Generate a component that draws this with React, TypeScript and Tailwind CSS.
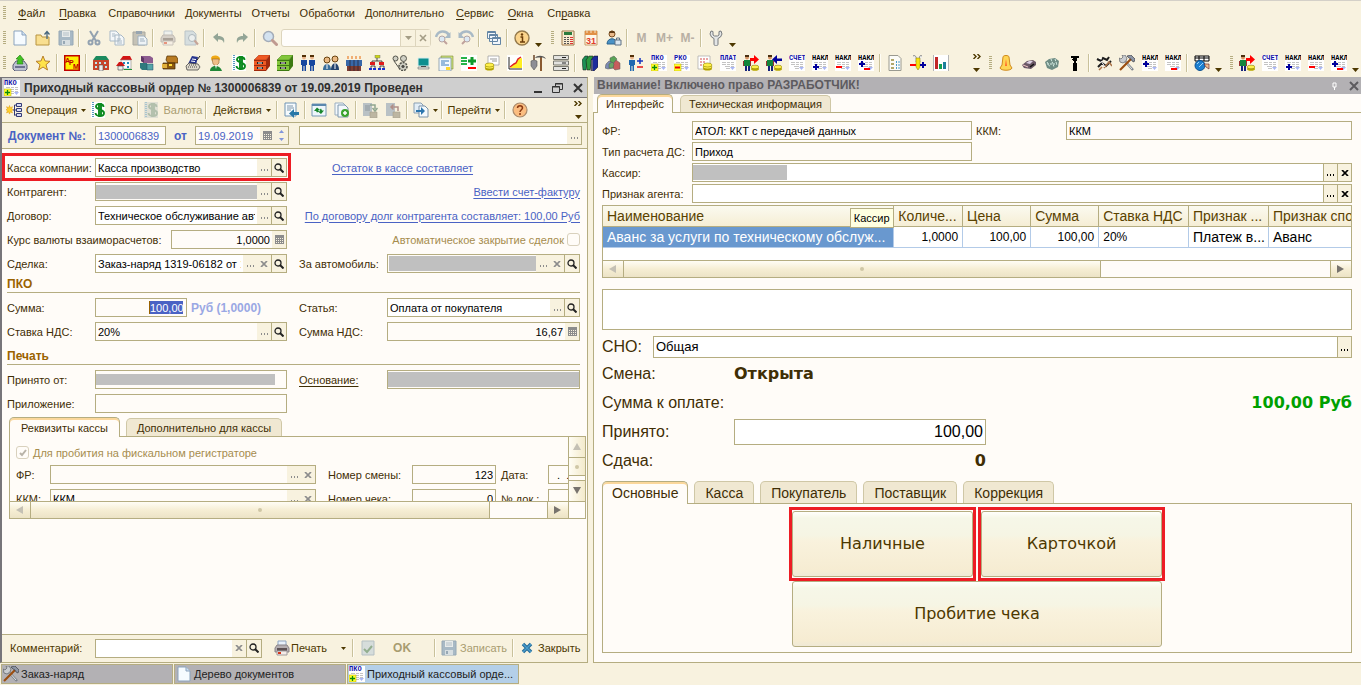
import { useId, type ReactNode } from 'react';

/* ---------- pixel icons ---------- */

type SlipProps = { label: string; color: string; sign: string };

function Slip({ label, color, sign }: SlipProps) {
  return (
    <g>
      <rect width="16" height="16" fill="#fff" />
      <path d="M2 7.500h4M7 7.500h3M11 7.500h3M2 9.500h4M7 9.500h3M11 9.500h3M5 11.500h5M11 11.500h3M6 13.500h4" stroke="#c3c3c3" />
      <path d="M10 12h5l-2.500 3z" fill="#a9b6f5" />
      <text x="0" y="5" fontSize="7" fontWeight="700" fontFamily="Liberation Mono, monospace" fill={color}>
        {label}
      </text>
      {sign === 'box+' && (
        <>
          <rect x="0" y="9" width="7" height="7" fill="#ffff2e" stroke="#b9a400" strokeWidth="0.500" />
          <path d="M1 12.500h5M3.500 10v5" stroke="#0a8a0a" strokeWidth="1.300" />
        </>
      )}
      {sign === 'box-' && (
        <>
          <rect x="0" y="9" width="7" height="7" fill="#ffff2e" stroke="#b9a400" strokeWidth="0.500" />
          <path d="M1 12.500h5" stroke="#e00" strokeWidth="2" />
        </>
      )}
      {sign === '+' && <path d="M1 12h6M4 9v6" stroke="#00009c" strokeWidth="2" />}
      {sign === '+up' && <path d="M1 9h6M4 6v6" stroke="#00009c" strokeWidth="2" />}
      {sign === '-' && <path d="M1 12h6" stroke="#f00" strokeWidth="2" />}
      {sign === '-r' && <path d="M6 14h6" stroke="#f00" strokeWidth="2" />}
      {sign === '+-' && (
        <>
          <path d="M1 9h6M4 6v6" stroke="#00009c" strokeWidth="2" />
          <path d="M6 14h6" stroke="#f00" strokeWidth="2" />
        </>
      )}
    </g>
  );
}

const coins = (
  <g>
    <ellipse cx="10.500" cy="13.500" rx="4.500" ry="2" fill="#b8a800" />
    <ellipse cx="10.500" cy="12" rx="4.500" ry="2" fill="#fff04a" stroke="#8c8000" strokeWidth="0.600" />
    <ellipse cx="10.500" cy="10" rx="4.500" ry="2" fill="#fff04a" stroke="#8c8000" strokeWidth="0.600" />
  </g>
);

const cabinet = (front: string, side: string) => (
  <g>
    <path d="M0 5l5-5h11l-4 5z" fill={front} stroke={side} strokeWidth="0.500" />
    <path d="M12 5l4-5v11l-4 5z" fill={side} />
    <path d="M0 5h12v11H0z" fill={front} />
    <path d="M0 5.500h12M0 10.500h12M0 15.500h12" stroke={side} />
    <path d="M3 7h6v2H3zM3 12h6v2H3z" fill="#222" />
    <path d="M4 8h4M4 13h4" stroke="#fff" />
  </g>
);

const person = (x: number, suit: string) => (
  <g>
    <circle cx={x} cy="2.500" r="2" fill="#e9b48a" />
    <path d={`M${x - 2} 0h4v2h-4z`} fill="#513008" />
    <path d={`M${x - 3} 5h6v5h-1v6h-1.500v-5h-1v5H${x - 2}v-6h-1z`} fill={suit} />
  </g>
);

const manArrow = (c: string, flip: boolean) => (
  <g>
    <circle cx="4" cy="2.500" r="2" fill="#d49464" />
    <path d="M2 0h4v2H2z" fill="#4a2f10" />
    <path d="M1 5h6v6H1z" fill="#12853b" />
    <path d="M2 11h2v5H2zM5 11h2v5H5z" fill="#15247c" />
    <path d="M0 6h1v5H0zM7 6h1v5H7z" fill="#933" />
    <path d={flip ? 'M16 3.500h-5V0L6 4.500 11 9V6h5z' : 'M7 3h4V0l5 4.500L11 9V6H7z'} fill={c} />
    <ellipse cx="12" cy="14" rx="4" ry="1.800" fill="#b8a800" />
    <ellipse cx="12" cy="12" rx="4" ry="1.800" fill="#fff04a" stroke="#8c8000" strokeWidth="0.600" />
  </g>
);

const hammerWrench = (
  <g>
    <path d="M4 4l10 11" stroke="#7f858c" strokeWidth="2.500" />
    <path d="M5 5l8 9" stroke="#dfe3e6" />
    <path d="M0 3l2 1 2-2-1-2h3l2 3-1 3-3 2-3-1z" fill="#c9ccd0" stroke="#5b6066" strokeWidth="0.700" />
    <path d="M12 4L1 15" stroke="#9a4d10" strokeWidth="2.200" />
    <path d="M8 1l4-1 4 4-1 3-2-1-1-2-2-1z" fill="#8d95a5" stroke="#3d4148" strokeWidth="0.700" />
  </g>
);

const sheet = (
  <g>
    <path d="M2 1h8l4 4v10H2z" fill="#f6fbff" stroke="#8ba3bd" />
    <path d="M10 1v4h4" fill="#cfe0f2" stroke="#8ba3bd" />
  </g>
);

const floppy = (
  <g>
    <path d="M1 1h14v14H1z" fill="#8ea7bd" stroke="#7790a8" />
    <path d="M4 1h8v6H4z" fill="#e3e9ee" />
    <path d="M5 3h6M5 5h6" stroke="#9db0c2" />
    <path d="M4 10h8v5H4z" fill="#cdd8e2" />
    <path d="M5 11h2v3H5z" fill="#7790a8" />
  </g>
);

const printer = (
  <g>
    <path d="M4 1h8v5H4z" fill="#e8f1fb" stroke="#8fa6c2" />
    <path d="M1 8l2-3h10l2 3v4H1z" fill="#b5afb2" stroke="#8a8488" />
    <path d="M3 8h10v3H3z" fill="#5d5254" />
    <path d="M3 11h10v4H3z" fill="#f4ece8" stroke="#a09a9c" />
    <path d="M4 12h3v2H4z" fill="#d8361c" />
  </g>
);

const dollar = (c: string, bg: string) => (
  <g>
    <path d="M1 0h14v16H1z" fill={bg} />
    <path d="M2 .5h2M2 2.500h2M2 4.500h2M2 6.500h2M2 8.500h2M2 10.500h2M2 12.500h2M2 14.500h2" stroke="#5a9ac0" />
    <path d="M13.500 5c0-4-7.500-4-7.500-.5C6 8 14 7 14 11c0 4-8 4-8.500 0M9 1v14M11 1v14" fill="none" stroke={c} strokeWidth="1.900" />
  </g>
);

const magnifier = (
  <g>
    <circle cx="6.500" cy="6.500" r="5" fill="#d3e2f0" stroke="#a3acb8" strokeWidth="1.500" />
    <path d="M10.500 10.500l4 4" stroke="#c09a90" strokeWidth="3" strokeLinecap="round" />
  </g>
);

const goto = (
  <g>
    <path d="M1 7C3 0 11 0 14 5" fill="none" stroke="#a9bac6" strokeWidth="2.500" />
    <path d="M15.500 2v6H9.500z" fill="#a9bac6" />
    <circle cx="7" cy="9" r="3" fill="#dbe8f3" stroke="#b3a5a5" />
    <path d="M9 11l3 3" stroke="#c0a29c" strokeWidth="2" />
  </g>
);

const icons: Record<string, ReactNode> = {
  new: sheet,
  open: (
    <g>
      <path d="M1 5h5l1 2h7v8H1z" fill="#f9df90" stroke="#b89440" />
      <path d="M12 9V2M9.500 4.500L12 1.500l2.500 3" fill="none" stroke="#45657d" strokeWidth="1.300" />
    </g>
  ),
  save: <g opacity="0.75">{floppy}</g>,
  cut: (
    <g fill="none" stroke="#93a2b0" strokeWidth="2">
      <path d="M4 1l6 10M12 1L6 11" />
      <circle cx="4.500" cy="12.500" r="2" />
      <circle cx="11.500" cy="12.500" r="2" />
    </g>
  ),
  copy: (
    <g stroke="#a9b9c6" fill="#f4f7f9">
      <path d="M1 1h6l3 3v7H1zM6 5h6l3 3v7H6z" />
      <path d="M3 4h3M3 6h3M8 9h4M8 11h5M8 13h5" />
    </g>
  ),
  paste: (
    <g>
      <path d="M1 2h12v13H1z" fill="#c5c2b6" stroke="#a9a89f" />
      <path d="M4 1h6v3H4z" fill="#97a5b1" />
      <path d="M6 6h6l3 3v6H6z" fill="#eef3f6" stroke="#9fb0be" />
      <path d="M8 9h4M8 11h5" stroke="#9fb0be" />
    </g>
  ),
  printMuted: <g opacity="0.5">{printer}</g>,
  preview: (
    <g opacity="0.7">
      <path d="M2 1h8l3 3v11H2z" fill="#c9d6e0" stroke="#a2b1be" />
      <circle cx="9" cy="8" r="3.500" fill="#e7eff5" stroke="#8fa0af" />
      <path d="M11.500 10.500l3.500 4" stroke="#b1847a" strokeWidth="2" />
    </g>
  ),
  undo: <path d="M2 7l5-4v3c5 0 7 2 6 7-1-3-3-4-6-3.500V12z" fill="#93a596" />,
  redo: <path d="M14 7L9 3v3c-5 0-7 2-6 7 1-3 3-4 6-3.500V12z" fill="#93a596" />,
  find: magnifier,
  goNext: goto,
  goPrev: <g transform="translate(16 0) scale(-1 1)">{goto}</g>,
  windows: (
    <g fill="#f1f6fb" stroke="#6486a5">
      <path d="M1.500 1.500h8v7h-8zM3.500 4.500h8v7h-8zM6.500 7.500h8v7h-8z" />
      <path d="M7 8.500h7M4 5.500h7M2 2.500h7" />
    </g>
  ),
  info: (
    <g>
      <circle cx="8" cy="8" r="7" fill="#fbd48c" stroke="#94794b" strokeWidth="1.400" />
      <circle cx="8" cy="4.500" r="1.200" fill="#6b3c08" />
      <path d="M6.500 7h2v5M6 12h5" stroke="#6b3c08" strokeWidth="1.500" fill="none" />
    </g>
  ),
  calc: (
    <g>
      <path d="M2 1h12v14H2z" fill="#f8ead0" stroke="#a07848" />
      <path d="M4 2h8v3H4z" fill="#2b7a3d" />
      <path d="M4 7h2v1H4zM7 7h2v1H7zM4 9h2v1H4zM7 9h2v1H7zM4 11h2v1H4zM7 11h2v1H7zM4 13h2v1H4zM7 13h2v1H7z" fill="#555" />
      <path d="M10 7h3v1h-3zM10 9h3v1h-3zM10 11h3v1h-3zM10 13h3v1h-3z" fill="#d33" />
    </g>
  ),
  calendar: (
    <g>
      <path d="M2 1h12v14H2z" fill="#fff7e8" stroke="#c69a66" />
      <path d="M2 1h12v4H2z" fill="#e08f45" />
      <path d="M4 0v3M8 0v3M12 0v3" stroke="#f7e3c4" />
      <text x="3" y="14" fontSize="9" fontWeight="700" fontFamily="Liberation Sans, sans-serif" fill="#e0402a">31</text>
    </g>
  ),
  userLock: (
    <g>
      <circle cx="6" cy="4" r="3" fill="#e9b98a" stroke="#7b4d22" />
      <path d="M3 3c0-3 6-3 6 0z" fill="#5f3a14" />
      <path d="M1 14c0-7 10-7 10 0z" fill="#4a92c6" stroke="#2d658f" />
      <path d="M9 10h6v5H9z" fill="#dce8f2" stroke="#5f7183" />
      <path d="M10.500 10V8h3v2" fill="none" stroke="#5f7183" />
    </g>
  ),
  wrench: (
    <path
      d="M3 1L2 4l1.500 3L6 8.500V14c0 2.500 4 2.500 4 0V8.500L12.500 7 14 4l-1-3-2 .5V5L9.500 6h-3L5 5V1.500z"
      fill="#e4e6e6"
      stroke="#777b7e"
    />
  ),
  archive: (
    <g>
      <path d="M1 10l3-4h8l3 4v4l-2 2H3l-2-2z" fill="#bfc3d2" stroke="#585c75" />
      <path d="M3 11h10v2H3z" fill="#6d7190" />
      <path d="M5 9l1-5H4l4-4 4 5h-2l1 4z" fill="#43c322" stroke="#207b11" strokeWidth="0.600" />
    </g>
  ),
  star: <path d="M8 1l2 5 5 .3-4 3.400 1.500 5.300L8 12l-4.500 3L5 9.700 1 6.300 6 6z" fill="#ffe34a" stroke="#b8802c" />,
  arm: (
    <g>
      <rect x="0.750" y="0.750" width="14.500" height="14.500" fill="#ffef00" stroke="#c00000" strokeWidth="1.500" />
      <text x="1" y="8" fontSize="7" fontWeight="700" fontFamily="Liberation Sans, sans-serif" fill="#c00000">A</text>
      <text x="5" y="10" fontSize="7" fontWeight="700" fontFamily="Liberation Sans, sans-serif" fill="#c00000">P</text>
      <text x="9" y="14" fontSize="7" fontWeight="700" fontFamily="Liberation Sans, sans-serif" fill="#c00000">M</text>
    </g>
  ),
  office: (
    <g>
      <path d="M3 1h10l3 4H0z" fill="#1c8a5e" />
      <path d="M0 5h16v10H0z" fill="#c8452c" />
      <path d="M2 7h2v2H2zM6 7h2v2H6zM11 7h2v2h-2zM2 11h2v2H2zM12 11h2v2h-2z" fill="#bfe6ee" />
      <path d="M6 10h4v6H6z" fill="#eee" stroke="#555" strokeWidth="0.600" />
    </g>
  ),
  house: (
    <g>
      <path d="M4 5l3-4h7l2 4z" fill="#d31515" />
      <path d="M5 5h10v9H5z" fill="#fbfbfb" stroke="#888" strokeWidth="0.600" />
      <path d="M7 7h2v2H7zM11 7h2v2h-2zM11 11h2v2h-2z" fill="#28b" />
      <path d="M0 11l3-4h3l3 4z" fill="#d31515" />
      <path d="M2 11h5v4H2z" fill="#eee" stroke="#444" strokeWidth="0.600" />
      <path d="M8 14h8v1H8z" fill="#1d9334" />
    </g>
  ),
  boxes: (
    <g>
      <path d="M2 1h9l3 2v5H5L2 6z" fill="#8d5c90" />
      <path d="M2 1v5l3 2V3z" fill="#5f3565" />
      <path d="M1 8h7v7H3l-2-2z" fill="#2f7a7d" />
      <path d="M8 9h6v6H8z" fill="#54a5a8" stroke="#246" strokeWidth="0.500" />
    </g>
  ),
  chest: (
    <g>
      <path d="M5 1h9l2 3v4H6L4 5z" fill="#b87b22" stroke="#4a2b00" strokeWidth="0.700" />
      <path d="M1 8h12v6H1z" fill="#8c5a10" stroke="#3c2200" strokeWidth="0.700" />
      <path d="M0 9h5v4H0z" fill="#e1b13c" />
      <path d="M7 9h3v2H7z" fill="#ffe03a" />
    </g>
  ),
  register: (
    <g>
      <path d="M7 1l6 1-2 8-8-1z" fill="#26348e" />
      <path d="M7 4l4 .5M6 6l4 .5" stroke="#fff" />
      <path d="M1 11l3-3 9 1 2 3-2 3H2z" fill="#ded9cc" stroke="#333" strokeWidth="0.700" />
      <path d="M3 12h9M4 10h7" stroke="#444" strokeDasharray="1 1" />
      <path d="M12 5l3-4" stroke="#222" />
    </g>
  ),
  man: (
    <g>
      <path d="M3 3c1-4 9-3 9 1l-1 2H4z" fill="#f0a915" />
      <path d="M4 4h7v4l-3 3-3-2z" fill="#f0be88" stroke="#7e4e1a" strokeWidth="0.500" />
      <path d="M2 16c0-6 10-7 12 0z" fill="#218737" />
      <path d="M7 10h2l-1 4z" fill="#fff" />
    </g>
  ),
  dollar: dollar('#0a8a1e', '#fff'),
  dollarMuted: <g opacity="0.5">{dollar('#6f8f7a', '#c9cfcb')}</g>,
  cabRed: cabinet('#ef5a24', '#a1290c'),
  cabGreen: cabinet('#83c63c', '#3d7a12'),
  twoMen: <g>{person(4, '#17479e')}{person(12, '#17479e')}</g>,
  managers: (
    <g>
      <circle cx="4" cy="5" r="3" fill="#eab983" stroke="#68420f" />
      <circle cx="12" cy="4" r="3" fill="#eab983" stroke="#68420f" />
      <path d="M0 15c0-8 8-8 8 0z" fill="#3b6f9b" />
      <path d="M8 15c0-9 8-9 8 0z" fill="#22436f" />
      <path d="M4 9v5M12 8v6" stroke="#fff" />
    </g>
  ),
  crowd: (
    <g>
      <path d="M0 5h16v6H0z" fill="#3868a8" />
      <path d="M1 1h2v3H1zM5 1h2v3H5zM9 1h2v3H9zM13 1h2v3h-2z" fill="#f0ae74" />
      <path d="M1 11h14v5H1z" fill="#7d3c32" />
      <path d="M4 5v11M8 5v11M12 5v11" stroke="#26212e" strokeWidth="0.700" />
    </g>
  ),
  tree: (
    <g>
      <path d="M6 0h5v3H6z" fill="#ccd613" stroke="#777" strokeWidth="0.500" />
      <path d="M8 3v3M3 8V6h10v2M2 13v-2h4v2M11 13v-2h4v2" stroke="#222" fill="none" strokeWidth="0.800" />
      <path d="M1 7h5v3H1zM10 7h5v3h-5z" fill="#e01b1b" />
      <path d="M0 13h3v2H0zM4 13h3v2H4zM9 13h3v2H9zM13 13h3v2h-3z" fill="#1b2fd1" />
    </g>
  ),
  gears: (
    <g fill="#cfcfc4" stroke="#54544c">
      <circle cx="3.500" cy="3.500" r="2.500" />
      <circle cx="11.500" cy="3.500" r="3" />
      <circle cx="11" cy="11.500" r="4" strokeDasharray="2 1" strokeWidth="1.500" />
      <path d="M2 6l5 7" />
      <circle cx="11" cy="11.500" r="1.200" fill="#444" />
    </g>
  ),
  monitor: (
    <g>
      <path d="M3 3h11v8H3z" fill="#0d8f8f" stroke="#d9efef" />
      <path d="M6 11h5v1H6z" fill="#444" />
      <path d="M3 12h11v2H3z" fill="#e3e3dc" stroke="#555" strokeWidth="0.500" />
    </g>
  ),
  docsYellow: (
    <g>
      <path d="M3 1h12v13H3z" fill="#cde27c" stroke="#7d8a36" strokeWidth="0.600" />
      <path d="M1 3h12v13H1z" fill="#f3f9fd" stroke="#7089a0" strokeWidth="0.700" />
      <path d="M3 6h8M3 8h4M3 10h8" stroke="#3d7cba" />
      <path d="M8 12h4v3H8z" fill="#ffd72e" />
    </g>
  ),
  greenPlus: (
    <g>
      <rect width="16" height="16" fill="#fff" />
      <path d="M0 3h6M0 6h6M0 9h6" stroke="#26b449" strokeWidth="2" />
      <path d="M7 6h8M11 2v8" stroke="#109a2b" strokeWidth="3" />
      <path d="M7 13h8" stroke="#f00" strokeWidth="2" />
    </g>
  ),
  coinDoc: (
    <g>
      <path d="M4 1h11v9H4z" fill="#fff" stroke="#9a9a9a" strokeWidth="0.700" />
      <path d="M6 4h7M8 6h5" stroke="#999" />
      <g transform="translate(-5 0)">{coins}</g>
    </g>
  ),
  graph: (
    <g>
      <rect width="16" height="16" fill="#fff" />
      <path d="M2 14V2M2 14h13" stroke="#222" />
      <path d="M3 13l4-4 2-1 2-4 4-1v10z" fill="#ffee22" />
      <path d="M3 12l4-3 2-1 2-4 3-2" fill="none" stroke="#e02121" strokeWidth="1.500" />
    </g>
  ),
  tools: (
    <g>
      <path d="M4 5V0" stroke="#6a4527" strokeWidth="1.500" />
      <path d="M1 6l3-1 3 1v5l-3 4-3-4z" fill="#8d8e95" stroke="#555" strokeWidth="0.600" />
      <path d="M11 2v14" stroke="#8a5a30" strokeWidth="2" />
      <path d="M5 3c2-3 9-3 11 1l-3-1.500H8z" fill="#555" />
    </g>
  ),
  server: (
    <g fill="#e3e3e0" stroke="#77776f">
      <path d="M.5.5h15v4H.5zM.5 6h15v4H.5zM.5 11.500h15v4H.5z" />
      <path d="M9 2.500h4M9 8h4M9 13.500h4" stroke="#222" />
    </g>
  ),
  books: (
    <g strokeWidth="0.500" stroke="#111">
      <path d="M0 5l3-4h3L4 15H1z" fill="#1e8f55" />
      <path d="M4 5l3-4h4L8 15H5z" fill="#2c9a40" />
      <path d="M9 5l3-4h4v11l-4 4H9z" fill="#1c2c9c" />
      <path d="M10 5v11" stroke="#ffe14d" />
    </g>
  ),
  cubes: (
    <g strokeWidth="0.500" stroke="#555">
      <path d="M5 3l4-2 3 3-3 4-4-1z" fill="#5aa457" />
      <path d="M1 9l3-3 4 2v5l-5 1-3-1z" fill="#7b8bb4" />
      <path d="M8 9l3-4 4 3v6l-5 1-2-2z" fill="#c75c5c" />
      <path d="M4 9l3-2 2 2-1 4H4z" fill="#69a567" />
    </g>
  ),
  manPm: (
    <g>
      {person(4, '#1f68b0')}
      <path d="M9 6h6M12 3v6" stroke="#1535c0" strokeWidth="1.500" />
      <path d="M9 12h6" stroke="#e01414" strokeWidth="1.500" />
    </g>
  ),
  pko: <Slip label="ПКО" color="#1414a8" sign="box+" />,
  rko: <Slip label="РКО" color="#1414a8" sign="box-" />,
  tableCoins: (
    <g>
      <path d="M1 1h12v13H1z" fill="#fff" stroke="#a8a8a8" strokeWidth="0.700" />
      <path d="M3 4h2M6 4h2M9 4h2M3 7h2M6 7h2M3 10h2" stroke="#d34b4b" />
      {coins}
    </g>
  ),
  plat: <Slip label="ПЛАТ" color="#1414a8" sign="" />,
  manOut: manArrow('#f00', false),
  manIn: manArrow('#00009c', true),
  schet: <Slip label="СЧЕТ" color="#1414a8" sign="" />,
  naklPlus: <Slip label="НАКЛ" color="#000" sign="+" />,
  naklMinus: <Slip label="НАКЛ" color="#000" sign="-" />,
  naklBoth: <Slip label="НАКЛ" color="#000" sign="+-" />,
  naklUp: <Slip label="НАКЛ" color="#000" sign="+up" />,
  naklMinusR: <Slip label="НАКЛ" color="#000" sign="-r" />,
  report: (
    <g>
      <path d="M2 .5h9l3 3v12H2z" fill="#fcfcf8" stroke="#9a9a90" />
      <path d="M4 4h3v2H4zM4 8h3v2H4zM4 12h3v2H4z" fill="#b1a86a" />
      <path d="M9.500 6v8M12 6v8" stroke="#4b9cc9" strokeDasharray="2 1" />
    </g>
  ),
  pencilArrows: (
    <g>
      <path d="M3 1c3-2 4 3 3 6M12 1c-3-2-3 3-2 6" fill="#eee" stroke="#888" />
      <path d="M6 3h4v9l-2 3-2-3z" fill="#f7e211" stroke="#8a7b00" strokeWidth="0.500" />
      <path d="M0 10h6" stroke="#f00" strokeWidth="2" />
      <path d="M10 10h6M13 7v6" stroke="#00009c" strokeWidth="2" />
    </g>
  ),
  bars: (
    <g>
      <rect width="16" height="16" fill="#fff" />
      <path d="M.5 0v16M15.500 0v16" stroke="#b5b5b5" />
      <path d="M2 2h3v12H2z" fill="#c22828" />
      <path d="M6 9h3v5H6z" fill="#12a04f" />
      <path d="M10 7h3v7h-3z" fill="#1d7f9c" />
    </g>
  ),
  bell: (
    <g>
      <path d="M5 2c0-2 6-2 6 0l1 8 2 3c-1 3-11 3-12 0l2-3z" fill="#ffd554" stroke="#d08a1c" />
      <path d="M8 4l1 7H7z" fill="#ff6a2a" />
    </g>
  ),
  car: (
    <g>
      <path d="M1 10l5-4 6-1 3 2v3l-5 4-7-1z" fill="#6b5866" />
      <path d="M5 8l3-2 4 0-3 3z" fill="#dccfe4" />
      <path d="M2 10l5 2" stroke="#f0c4c4" />
      <path d="M9 12l4-3" stroke="#111" strokeWidth="1.500" />
    </g>
  ),
  engine: (
    <g>
      <path d="M1 7l4-3 6-1 4 3-1 6-6 3-5-2z" fill="#6e8c84" />
      <path d="M3 7l3 5M7 4l3 8M11 4l2 6M3 9h10" stroke="#d9efe6" strokeDasharray="2 1" />
    </g>
  ),
  piston: (
    <g fill="#000">
      <path d="M4 1h8v2H4zM6 3h4v3H6zM7 6h2v3H7zM5 4h2v1H5zM6 8h4v8H6z" />
    </g>
  ),
  chassis: (
    <g stroke="#1c1c1c" fill="none">
      <path d="M1 4l4 2 2-3 4 2 2-3M2 12l4-4 4 3 5-5" strokeWidth="2" />
      <path d="M8 13l5-6 3 4M3 15l3-3" stroke="#aa7348" strokeWidth="1.500" />
      <path d="M5 6l4 6M3 3l3 1" stroke="#fff" />
    </g>
  ),
  hammerWrench,
  globeTable: (
    <g>
      <path d="M1 1h14v5H1z" fill="#fff" stroke="#000" />
      <path d="M1 3h14M5 1v5M10 1v5" stroke="#000" />
      <circle cx="6" cy="10.500" r="5" fill="#1b7fd0" stroke="#0a4f91" />
      <path d="M3 9l2-2M5 12l4-4" stroke="#9fd2f7" />
      <path d="M10 9h5v5l-3-2z" fill="#f0c090" stroke="#512" strokeWidth="0.600" />
    </g>
  ),
  operation: (
    <g>
      <path d="M3.500 3.500l.8 2.200 2.200-1-1 2.200 2 .9-2 .9 1 2.200-2.200-1-.8 2.200-.8-2.200-2.200 1 1-2.200-1.500-.9 1.500-.9-1-2.200 2.200 1z" fill="#ffcf2a" stroke="#dd9a10" strokeWidth="0.500" />
      <path d="M7 8h3M8.500 3v10.500M8.500 3H10M8.500 13H10" stroke="#333a77" fill="none" />
      <path d="M10.500 1.500h5v3h-5zM10.500 6.500h5v3h-5zM10.500 11.500h5v3h-5z" fill="#d6daf2" stroke="#333a77" />
    </g>
  ),
  sheetBack: (
    <g>
      <path d="M2 1h11v13H2z" fill="#f5fafd" stroke="#6f93b3" />
      <path d="M4 4h6M4 6h7M4 8h4" stroke="#7e97ac" />
      <path d="M16 10h-5V7l-5 4.500 5 4.500v-3h5z" fill="#2878a8" />
    </g>
  ),
  refresh: (
    <g>
      <path d="M1 2h14v12H1z" fill="#eef6fb" stroke="#7799b6" />
      <path d="M1 3h14" stroke="#5b88ae" strokeWidth="2" />
      <path d="M3 9l3-3.500L9 8H7.500c0 1 0 1 .5 1.500L6 10.500 5 9zM13 8.500L10 12l-3-2.500h1.500c.5-1 .5-1 0-1.500L10 6.500l1 2z" fill="#17872c" />
    </g>
  ),
  addDoc: (
    <g>
      <path d="M1 1h8l2 2v10H1z" fill="#f3f8fc" stroke="#9aaec0" />
      <path d="M4 3h7l3 3v9H4z" fill="#f3f8fc" stroke="#7f98ae" />
      <circle cx="11" cy="11" r="4" fill="#3ba32e" />
      <path d="M9 11h4M11 9v4" stroke="#fff" strokeWidth="1.500" />
    </g>
  ),
  postMuted: (
    <g>
      <path d="M1 1h9v13H1z" fill="#b9c1c5" />
      <path d="M8 10h7v6H8z" fill="#bdb6a2" stroke="#aaa28e" strokeWidth="0.600" />
      <path d="M8 3h5v4M10.500 6L13 9l2.500-3" stroke="#8fa58e" strokeWidth="1.500" fill="none" />
      <path d="M3 4h5M3 6h5M3 8h5" stroke="#8d979d" />
    </g>
  ),
  unpostMuted: (
    <g>
      <path d="M1 1h9v13H1z" fill="#b9c1c5" />
      <path d="M8 10h7v6H8z" fill="#bdb6a2" stroke="#aaa28e" strokeWidth="0.600" />
      <path d="M13 9V5H7M8.500 2.500L6 5l2.500 2.500" stroke="#b08f88" strokeWidth="1.500" fill="none" />
    </g>
  ),
  basedOn: (
    <g>
      <path d="M1 1h7l2 2v8H1z" fill="#e3eef7" stroke="#8a9fb2" />
      <path d="M6 4h6l3 3v8H6z" fill="#f4f9fc" stroke="#7d93a8" />
      <path d="M3 8h5V5l4 4-4 4v-3H3z" fill="#2c76ae" />
    </g>
  ),
  help: (
    <g>
      <circle cx="8" cy="8" r="7" fill="#fbbd80" stroke="#a98a6c" strokeWidth="1.200" />
      <path d="M5.500 6c0-3 5-3 5 0 0 1.500-2.500 2-2.500 4" stroke="#8c3a12" strokeWidth="1.500" fill="none" />
      <circle cx="8" cy="12" r="1" fill="#8c3a12" />
    </g>
  ),
  printer,
  okDoc: (
    <g opacity="0.65">
      <path d="M2 1h12v14H2z" fill="#c5d2da" stroke="#93a7b5" />
      <path d="M4 9l3 3 5-6" stroke="#5c8a63" strokeWidth="2" fill="none" />
    </g>
  ),
  closeBlue: (
    <g>
      <path d="M4 4l8 8M12 4l-8 8" stroke="#236a98" strokeWidth="3.500" />
      <path d="M4 4l8 8M12 4l-8 8" stroke="#4a9ccb" strokeWidth="1.500" />
    </g>
  ),
};

function Icon({ name }: { name: string }) {
  return (
    <svg viewBox="0 0 16 16" className="h-4 w-4 shrink-0" aria-hidden="true">
      {icons[name]}
    </svg>
  );
}

/* ---------- toolbar parts ---------- */

function Grip() {
  return (
    <span className="mr-[2px] h-[14px] w-[3px] shrink-0 bg-[repeating-linear-gradient(to_bottom,#b5ad81_0px,#b5ad81_1px,#f8f2df_1px,#f8f2df_2px)]" />
  );
}

function Sep({ tight }: { tight?: boolean }) {
  return (
    <span className={`h-[18px] w-[2px] shrink-0 border-l border-[#c9c19b] bg-[#fffdf5] ${tight ? 'mr-[2px] ml-px' : 'mx-[2px]'}`} />
  );
}

function ToolButton({ name }: { name: string }) {
  return (
    <button type="button" aria-label={name} className="flex h-[22px] w-[23px] shrink-0 items-center justify-center">
      <Icon name={name} />
    </button>
  );
}

function Tools({ items, tight }: { items: string[]; tight?: boolean }) {
  return (
    <>
      {items.map((n, i) => (n === '|' ? <Sep key={i} tight={tight} /> : <ToolButton key={i} name={n} />))}
    </>
  );
}

function Caret() {
  return (
    <svg viewBox="0 0 5 3" className="h-[3px] w-[5px] shrink-0" aria-hidden="true">
      <path d="M0 0h5L2.500 3z" fill="#4d3800" />
    </svg>
  );
}

function BarEnd() {
  return (
    <button type="button" aria-label="Настройка панели" className="flex h-[18px] w-[11px] shrink-0 items-end justify-center">
      <svg viewBox="0 0 7 4" className="h-1 w-[7px]" aria-hidden="true">
        <path d="M0 0h7L3.500 4z" fill="#4d3800" />
      </svg>
    </button>
  );
}

function Chevrons() {
  return (
    <button type="button" aria-label="Ещё" className="flex h-[18px] w-[10px] shrink-0 flex-col items-center justify-between">
      <svg viewBox="0 0 8 5" className="h-[5px] w-2" aria-hidden="true">
        <path d="M0.500 0l2.500 2.500L0.500 5M4.500 0L7 2.500 4.500 5" fill="none" stroke="#4d3800" strokeWidth="1.400" />
      </svg>
      <svg viewBox="0 0 7 4" className="h-1 w-[7px]" aria-hidden="true">
        <path d="M0 0h7L3.500 4z" fill="#4d3800" />
      </svg>
    </button>
  );
}

/* ---------- form parts ---------- */

type Btn = 'dots' | 'x' | 'mag' | 'calc' | 'dotsB' | 'xB' | 'calcDate' | 'spin';

function FieldButton({ kind }: { kind: Btn }) {
  if (kind === 'dots' || kind === 'dotsB')
    return (
      <button
        type="button"
        aria-label="Выбрать"
        className={`flex w-[14px] shrink-0 items-center justify-center bg-[#f8f2df] ${kind === 'dotsB' ? 'border-l border-[#b5ad81] text-black' : 'text-[#8c8c8c]'}`}
      >
        <svg viewBox="0 0 7 2" className="mt-[5px] h-[2px] w-[7px]" aria-hidden="true">
          <path d="M0 0h1v2H0zM3 0h1v2H3zM6 0h1v2H6z" fill="currentColor" />
        </svg>
      </button>
    );
  if (kind === 'x' || kind === 'xB')
    return (
      <button
        type="button"
        aria-label="Очистить"
        className={`flex w-[14px] shrink-0 items-center justify-center bg-[#f8f2df] ${kind === 'xB' ? 'border-l border-[#b5ad81] text-black' : 'text-[#8c8c8c]'}`}
      >
        <svg viewBox="0 0 8 6" className="h-[6px] w-2" aria-hidden="true">
          <path d="M1 0l6 6M7 0L1 6" stroke="currentColor" strokeWidth="1.700" />
        </svg>
      </button>
    );
  if (kind === 'mag')
    return (
      <button type="button" aria-label="Открыть" className="flex w-[15px] shrink-0 items-center justify-center border-l border-[#b5ad81] bg-[#f8f2df]">
        <svg viewBox="0 0 10 10" className="h-[10px] w-[10px]" aria-hidden="true">
          <circle cx="4" cy="4" r="3" fill="none" stroke="#222" strokeWidth="1.300" />
          <path d="M6 6l3.500 3.500" stroke="#222" strokeWidth="2" />
        </svg>
      </button>
    );
  if (kind === 'spin')
    return (
      <span className="flex w-[14px] shrink-0 flex-col items-center justify-between bg-[#f8f2df] py-[3px]">
        <svg viewBox="0 0 5 3" className="h-[3px] w-[5px]" aria-hidden="true">
          <path d="M0 3h5L2.500 0z" fill="#8095dc" />
        </svg>
        <svg viewBox="0 0 5 3" className="h-[3px] w-[5px]" aria-hidden="true">
          <path d="M0 0h5L2.500 3z" fill="#8095dc" />
        </svg>
      </span>
    );
  return (
    <button type="button" aria-label="Калькулятор" className="flex w-[14px] shrink-0 items-center justify-center bg-[#f8f2df]">
      <svg viewBox="0 0 9 9" className="h-[9px] w-[9px]" aria-hidden="true">
        <path d="M0 0h9v9H0z" fill="#8c8c8c" />
        <path d="M1 3.500h7M1 5.500h7M1 7.500h7" stroke="#f8f2df" strokeDasharray="1 1" />
      </svg>
    </button>
  );
}

type BoxProps = {
  id?: string;
  label?: string;
  value?: string;
  buttons?: Btn[];
  right?: boolean;
  white?: boolean;
  tone?: string;
  size?: string;
  pad?: string;
  mask?: string;
};

function Box({ id, label, value = '', buttons = [], right, white, tone = 'text-black', size = 'h-[19px]', pad = 'px-[2px]', mask }: BoxProps) {
  return (
    <span className={`flex min-w-0 flex-1 border border-[#b5ad81] ${white ? 'bg-white' : 'bg-[#fffcf8]'} ${size}`}>
      {mask ? (
        <span className="flex min-w-0 flex-1 items-center">
          <span className={`bg-[#c0c0c0] ${mask}`} />
        </span>
      ) : (
        <input
          id={id}
          aria-label={label}
          defaultValue={value}
          className={`w-0 min-w-0 flex-1 bg-transparent outline-none ${pad} ${tone} ${right ? 'text-right' : ''}`}
        />
      )}
      {buttons.map((b) => (
        <FieldButton key={b} kind={b} />
      ))}
    </span>
  );
}

type FieldProps = Omit<BoxProps, 'id' | 'label'> & { label: string; labelWidth?: string; underline?: boolean };

function Field({ label, labelWidth = 'w-[88px]', underline, ...box }: FieldProps) {
  const id = useId();
  return (
    <div className="flex items-center">
      <label htmlFor={id} className={`shrink-0 whitespace-nowrap ${labelWidth} ${underline ? 'underline underline-offset-2' : ''}`}>
        {label}
      </label>
      <Box id={id} {...box} />
    </div>
  );
}

function Tab({ children, active, size }: { children: string; active?: boolean; size: string }) {
  return (
    <button
      type="button"
      role="tab"
      aria-selected={!!active}
      className={`flex items-center justify-center rounded-t-[5px] border border-b-0 whitespace-nowrap ${size} ${
        active
          ? 'relative z-10 -mb-px border-[#b5ad81] bg-[#fffcf8] shadow-[inset_0_2px_0_#fbd79b]'
          : 'border-[#cfc7a6] bg-[#f0e8d2]'
      }`}
    >
      {children}
    </button>
  );
}

function Arrow({ dir, dim }: { dir: 'left' | 'right' | 'up' | 'down'; dim?: boolean }) {
  const d = { left: 'M7 0v8L0 4z', right: 'M0 0v8l7-4z', up: 'M0 7h8L4 0z', down: 'M0 0h8L4 7z' }[dir];
  return (
    <svg viewBox="0 0 8 8" className="h-2 w-2" aria-hidden="true">
      <path d={d} fill={dim ? '#c4c0b4' : '#77736d'} />
    </svg>
  );
}

function HScroll({ thumb }: { thumb: string }) {
  const grad = 'bg-[linear-gradient(#fffdf5,#f6eed4_50%,#ece3c6)]';
  return (
    <div className="flex h-[17px] border-t border-[#b5ad81] bg-[#fffcf8]">
      <button type="button" aria-label="Влево" className={`flex w-[21px] shrink-0 items-center justify-center border-r border-[#b5ad81] ${grad}`}>
        <Arrow dir="left" dim />
      </button>
      <span className="flex min-w-0 flex-1">
        <span className={`flex items-center justify-center border-r border-[#b5ad81] ${thumb} ${grad}`}>
          <span className="h-1 w-1 rounded-full bg-[#cfc7a6]" />
        </span>
      </span>
      <button type="button" aria-label="Вправо" className={`flex w-[21px] shrink-0 items-center justify-center border-l border-[#b5ad81] ${grad}`}>
        <Arrow dir="right" />
      </button>
    </div>
  );
}

function Heading({ children }: { children: string }) {
  return <h2 className="border-b border-[#b5ad81] text-[12px] leading-[15px] font-bold text-[#9a6200]">{children}</h2>;
}

/* ---------- main menu and toolbars ---------- */

function Menu() {
  const items: [string, string, string][] = [
    ['', 'Ф', 'айл'],
    ['', 'П', 'равка'],
    ['Справочники', '', ''],
    ['Документы', '', ''],
    ['Отчеты', '', ''],
    ['Обработки', '', ''],
    ['Дополнительно', '', ''],
    ['', 'С', 'ервис'],
    ['', 'О', 'кна'],
    ['Сп', 'р', 'авка'],
  ];
  return (
    <nav className="flex h-6 items-center pl-[3px]">
      <Grip />
      <div className="flex gap-[10px] pl-2">
        {items.map(([a, u, b]) => (
          <button key={a + u + b} type="button" className={u ? 'px-[2px]' : ''}>
            {a}
            {u && <u className="underline-offset-2">{u}</u>}
            {b}
          </button>
        ))}
      </div>
    </nav>
  );
}

function StandardBar() {
  return (
    <div className="flex h-[25px] items-center pl-[3px]">
      <Grip />
      <Tools tight items={['new', 'open', 'save', '|', 'cut', 'copy', 'paste', '|', 'printMuted', 'preview', '|', 'undo', 'redo', '|', 'find']} />
      <div className="flex h-[18px] w-[150px] shrink-0 rounded-[3px] border border-[#ddd5bd] bg-[#fffdfb]">
        <input aria-label="Поиск" className="w-0 flex-1 bg-transparent px-1 outline-none" />
        <button type="button" aria-label="Список" className="flex w-[15px] items-center justify-center border-l border-[#ddd5bd] bg-[#f8f2df]">
          <svg viewBox="0 0 7 4" className="h-1 w-[7px]" aria-hidden="true">
            <path d="M0 0h7L3.500 4z" fill="#a49d86" />
          </svg>
        </button>
        <button type="button" aria-label="Сброс" className="flex w-[15px] items-center justify-center border-l border-[#ddd5bd] bg-[#f8f2df]">
          <svg viewBox="0 0 8 8" className="h-2 w-2" aria-hidden="true">
            <path d="M1 1l6 6M7 1L1 7" stroke="#a49d86" strokeWidth="1.600" />
          </svg>
        </button>
      </div>
      <Tools tight items={['goNext', 'goPrev', '|', 'windows', '|', 'info']} />
      <BarEnd />
      <span className="w-[7px]" />
      <Grip />
      <Tools tight items={['calc', 'calendar', 'userLock', '|']} />
      {['M', 'M+', 'M-'].map((m) => (
        <button key={m} type="button" className="w-[23px] shrink-0 text-center text-[12px] font-bold text-[#b8b0a4]">
          {m}
        </button>
      ))}
      <Tools tight items={['|', 'wrench']} />
      <BarEnd />
    </div>
  );
}

function ObjectsBar() {
  return (
    <div className="flex h-[26px] items-center pl-[3px]">
      <Grip />
      <Tools
        items={[
          'archive', 'star', '|', 'arm', '|', 'office', 'house', 'boxes', 'chest', 'register', 'man', 'dollar',
          'cabRed', 'cabGreen', 'twoMen', 'managers', 'crowd', 'tree', 'gears', 'monitor', 'docsYellow', 'greenPlus',
          'coinDoc', 'graph', 'tools', 'server', '|', 'books', 'cubes', 'manPm', 'pko', 'rko', 'tableCoins', 'plat',
          'manOut', 'manIn', 'schet', 'naklPlus', 'naklMinus', 'naklBoth', '|', 'report', 'pencilArrows', 'bars',
        ]}
      />
      <span className="w-[26px]" />
      <Chevrons />
      <span className="w-[10px]" />
      <Grip />
      <Tools items={['bell', 'car', 'engine', 'piston', '|', 'chassis', 'hammerWrench', 'naklUp', 'naklMinusR', '|', 'globeTable']} />
      <BarEnd />
      <span className="w-[8px]" />
      <Grip />
      <Tools items={['manOut', 'schet', 'naklPlus', 'naklMinus', 'naklBoth']} />
      <BarEnd />
    </div>
  );
}

/* ---------- order window ---------- */

function OrderToolbar() {
  const text = 'flex items-center gap-[4px] whitespace-nowrap text-[#4d3800]';
  return (
    <div className="flex h-[25px] items-center border-b border-[#b5ad81] bg-[#f8f2df] pr-1 pl-[4px]">
      <button type="button" className={text}>
        <Icon name="operation" />
        Операция
        <Caret />
      </button>
      <button type="button" className={`mr-[4px] ml-[4px] ${text}`}>
        <Icon name="dollar" />
        РКО
      </button>
      <Sep tight />
      <button type="button" disabled className="mr-[2px] ml-[2px] flex items-center gap-[4px] text-[#a89c70]">
        <Icon name="dollarMuted" />
        Валюта
      </button>
      <Sep tight />
      <button type="button" className={`mx-[4px] ${text}`}>
        Действия
        <Caret />
      </button>
      <Tools tight items={['|', 'sheetBack', '|', 'refresh', 'addDoc', '|', 'postMuted', 'unpostMuted', '|', 'basedOn']} />
      <Caret />
      <span className="w-[2px]" />
      <Sep tight />
      <button type="button" className={`mx-[3px] ${text}`}>
        Перейти
        <Caret />
      </button>
      <Tools tight items={['|', 'help']} />
      <span className="ml-auto">
        <Chevrons />
      </span>
    </div>
  );
}

function CashTab() {
  return (
    <div className="flex h-[64px] overflow-hidden">
      <div className="min-w-0 flex-1 overflow-hidden pt-[6px] pl-[6px]">
        <label className="flex h-[19px] items-center gap-[4px] text-[#a68c4e]">
          <input type="checkbox" defaultChecked disabled className="sr-only" />
          <span className="flex h-[13px] w-[13px] items-center justify-center rounded-[3px] border border-[#d9d1bd] bg-[#fffcf8]">
            <svg viewBox="0 0 8 8" className="h-2 w-2" aria-hidden="true">
              <path d="M1 4l2 2 4-5" fill="none" stroke="#b9b3a8" strokeWidth="2" />
            </svg>
          </span>
          Для пробития на фискальном регистраторе
        </label>
        <div className="mt-[3px] grid grid-cols-[300px_168px_94px] gap-x-[12px] gap-y-[5px]">
          <Field label="ФР:" labelWidth="w-[34px]" buttons={['dots', 'x']} />
          <Field label="Номер смены:" labelWidth="w-[84px]" value="123" right />
          <div className="-ml-[7px]">
            <Field label="Дата:" labelWidth="w-[47px]" value="  .  ." />
          </div>
          <Field label="ККМ:" labelWidth="w-[34px]" value="ККМ" buttons={['dots', 'x']} />
          <Field label="Номер чека:" labelWidth="w-[84px]" value="0" right />
          <div className="-ml-[7px]">
            <Field label="№ док.:" labelWidth="w-[47px]" />
          </div>
        </div>
      </div>
      <div className="flex w-[17px] shrink-0 flex-col border-l border-[#b5ad81]">
        <button type="button" aria-label="Вверх" className="flex h-[21px] items-center justify-center border-b border-[#b5ad81] bg-[linear-gradient(90deg,#fffdf5,#f3eacb)]">
          <Arrow dir="up" dim />
        </button>
        <span className="flex h-[18px] items-center justify-center border-b border-[#b5ad81] bg-[linear-gradient(90deg,#fffdf5,#f3eacb)]">
          <span className="h-1 w-1 rounded-full bg-[#cfc7a6]" />
        </span>
        <span className="flex-1" />
        <button type="button" aria-label="Вниз" className="flex h-[21px] items-center justify-center border-t border-[#b5ad81] bg-[linear-gradient(90deg,#fffdf5,#f3eacb)]">
          <Arrow dir="down" />
        </button>
      </div>
    </div>
  );
}

function OrderWindow() {
  const link = 'text-[#4a62c4] underline underline-offset-2 whitespace-nowrap';
  return (
    <section className="flex min-w-0 flex-col border-t border-r border-b border-l-2 border-t-[#77757a] border-r-[#b5ad81] border-b-[#b5ad81] border-l-[#77757a] bg-[#fffcf8]">
      <header className="flex h-[20px] items-center border-b border-[#77757a] bg-[#cfcfcf] pr-[4px] pl-[2px]">
        <Icon name="pko" />
        <h1 className="ml-[4px] flex-1 truncate text-[12px] font-bold text-[#303030]">
          Приходный кассовый ордер № 1300006839 от 19.09.2019 Проведен
        </h1>
        <div className="flex items-center gap-[10px] text-[#333]">
          <button type="button" aria-label="Свернуть" className="flex h-[10px] items-end">
            <span className="h-[2px] w-2 bg-[#333]" />
          </button>
          <button type="button" aria-label="Восстановить">
            <svg viewBox="0 0 11 10" className="h-[10px] w-[11px]" aria-hidden="true">
              <path d="M3.500 3V0.500h7v6H8M0.500 3.500h7v6h-7z" fill="none" stroke="currentColor" />
              <path d="M3 1h8M0 4h8" stroke="currentColor" />
            </svg>
          </button>
          <button type="button" aria-label="Закрыть">
            <svg viewBox="0 0 10 10" className="h-[10px] w-[10px]" aria-hidden="true">
              <path d="M1 1l8 8M9 1L1 9" stroke="currentColor" strokeWidth="2" />
            </svg>
          </button>
        </div>
      </header>
      <OrderToolbar />
      <div className="flex h-[26px] items-center border-b border-[#b5ad81] bg-[#f8f2df] pr-[5px] pl-[6px] text-[#4a62c4]">
        <label htmlFor="doc-number" className="w-[87px] text-[12px] font-bold">
          Документ №:
        </label>
        <span className="flex w-[71px]">
          <Box id="doc-number" value="1300006839" tone="text-[#4a62c4]" />
        </span>
        <label htmlFor="doc-date" className="w-[29px] pl-2 text-[12px] font-bold">
          от
        </label>
        <span className="flex w-[94px]">
          <Box id="doc-date" value="19.09.2019" tone="text-[#4a62c4]" buttons={['calcDate', 'spin']} />
        </span>
        <span className="w-[10px]" />
        <Box label="Комментарий к номеру" white buttons={['dots']} />
      </div>

      <div className="flex flex-1 flex-col px-[5px] pt-[9px] pr-[7px]">
        <div className="grid grid-cols-[280px_minmax(0,1fr)] items-center gap-x-[12px] gap-y-[5px]">
          <div className="relative">
            <Field label="Касса компании:" value="Касса производство" white buttons={['dots', 'mag']} />
            <span className="pointer-events-none absolute -top-[5px] -right-1 -bottom-1 -left-[5px] border-[3px] border-[#ed1c24]" />
          </div>
          <a href="#balance" className={`ml-[33px] justify-self-start ${link}`}>Остаток в кассе составляет</a>
          <Field label="Контрагент:" mask="h-[14px] w-full" buttons={['dots', 'mag']} />
          <a href="#invoice" className={`justify-self-end ${link}`}>Ввести счет-фактуру</a>
          <Field label="Договор:" value="Техническое обслуживание автомобиля" white buttons={['dots', 'mag']} />
          <a href="#debt" className={`justify-self-end ${link}`}>По договору долг контрагента составляет: 100,00 Руб</a>
          <Field label="Курс валюты взаиморасчетов:" labelWidth="w-[164px]" value="1,0000" right buttons={['calc']} />
          <label className="flex items-center gap-[3px] justify-self-end whitespace-nowrap text-[#a68c4e]">
            Автоматическое закрытие сделок
            <input type="checkbox" disabled className="h-[13px] w-[13px] appearance-none rounded-[3px] border border-[#d9d1bd] bg-[#fffcf8]" />
          </label>
          <Field label="Сделка:" value="Заказ-наряд 1319-06182 от 19.09.2019" white buttons={['dots', 'x', 'mag']} />
          <Field label="За автомобиль:" mask="ml-[1px] h-[15px] w-full" buttons={['dots', 'x', 'mag']} />
        </div>

        <div className="mt-[4px] mb-[5px]">
          <Heading>ПКО</Heading>
        </div>
        <div className="grid grid-cols-[280px_minmax(0,1fr)] items-center gap-x-[12px] gap-y-[5px]">
          <div className="flex items-center">
            <label htmlFor="sum" className="w-[88px]">Сумма:</label>
            <span className="flex h-[19px] w-[92px] items-center justify-end border border-[#b5ad81] pr-[3px]">
              <input id="sum" defaultValue="100,00" className="h-[13px] w-[34px] border-l border-[#9a6200] bg-[#4a62c4] text-right text-white outline-none" />
            </span>
            <span className="ml-[4px] text-[12px] font-bold text-[#9aa8e4]">Руб (1,0000)</span>
          </div>
          <Field label="Статья:" value="Оплата от покупателя" white buttons={['dots', 'mag']} />
          <Field label="Ставка НДС:" value="20%" buttons={['dots', 'mag']} />
          <Field label="Сумма НДС:" value="16,67" right buttons={['calc']} />
        </div>

        <div className="mt-2 mb-[5px]">
          <Heading>Печать</Heading>
        </div>
        <div className="grid grid-cols-[280px_minmax(0,1fr)] items-center gap-x-[12px] gap-y-[5px]">
          <Field label="Принято от:" mask="h-[11px] w-[179px]" />
          <Field label="Основание:" underline mask="h-[15px] w-full" />
          <Field label="Приложение:" />
        </div>

        <div role="tablist" className="mt-[4px] ml-[2px] flex items-end gap-[6px]">
          <Tab active size="h-[20px] w-[111px] text-[11px]">Реквизиты кассы</Tab>
          <Tab size="h-[18px] w-[156px] text-[11px]">Дополнительно для кассы</Tab>
        </div>
        <div className="-mr-[6px] ml-[2px] border border-[#b5ad81]">
          <CashTab />
          <div className="flex">
            <div className="min-w-0 flex-1">
              <HScroll thumb="w-[89%]" />
            </div>
            <span className="w-[17px] shrink-0 border-t border-l border-[#b5ad81]" />
          </div>
        </div>
      </div>

      <footer className="flex h-[28px] shrink-0 items-center border-t border-[#b5ad81] bg-[#f8f2df] px-[6px] pb-px whitespace-nowrap text-[#4d3800]">
        <div className="ml-[2px] w-[252px]">
          <Field label="Комментарий:" labelWidth="w-[85px]" white buttons={['x', 'mag']} />
        </div>
        <button type="button" className="ml-[12px] flex items-center gap-px">
          <Icon name="printer" />
          Печать
        </button>
        <span className="w-[14px]" />
        <Caret />
        <span className="w-[4px]" />
        <Sep />
        <button type="button" className="ml-[4px] flex w-[72px] items-center text-[12px] font-bold text-[#a89c70]">
          <Icon name="okDoc" />
          <span className="flex-1 pr-1 text-center">OK</span>
        </button>
        <Sep />
        <button type="button" disabled className="mx-[3px] flex items-center gap-[3px] text-[#a89c70]">
          <Icon name="save" />
          Записать
        </button>
        <Sep />
        <button type="button" className="ml-[3px] flex items-center gap-[3px]">
          <Icon name="closeBlue" />
          Закрыть
        </button>
      </footer>
    </section>
  );
}

/* ---------- cashier panel ---------- */

const columns = ['Количе...', 'Цена', 'Сумма', 'Ставка НДС', 'Признак ...', 'Признак способа'];

function GoodsTable() {
  const th = 'h-[21px] truncate border-b border-l border-[#b5ad81] px-[4px] text-left font-normal';
  const td = 'h-[21px] truncate border-b border-l border-[#b3cbe8] px-[4px] text-black';
  return (
    <div className="mt-[2px] border border-[#b5ad81] bg-white">
      <div className="relative h-[54px] overflow-hidden">
        <table className="w-full table-fixed border-separate border-spacing-0 text-[14px] leading-[20px]">
          <colgroup>
            <col />
            <col className="w-[9.200%]" />
            <col className="w-[9.100%]" />
            <col className="w-[9.100%]" />
            <col className="w-[12%]" />
            <col className="w-[10.700%]" />
            <col className="w-[11.100%]" />
          </colgroup>
          <thead className="bg-[linear-gradient(#fbfaf0,#f5edd3)] text-[#5a4200]">
            <tr>
              <th className={`${th} border-l-0`}>Наименование</th>
              {columns.map((c, i) => (
                <th key={c} className={i === 5 ? `${th} text-clip` : th}>
                  {c}
                </th>
              ))}
            </tr>
          </thead>
          <tbody>
            <tr>
              <td className={`${td} border-l-0 bg-[#6998cf]`}>
                <span className="text-white">Аванс за услуги по техническому обслуж...</span>
              </td>
              <td className={`${td} text-right text-[12px]`}>1,0000</td>
              <td className={`${td} text-right text-[12px]`}>100,00</td>
              <td className={`${td} text-right text-[12px]`}>100,00</td>
              <td className={`${td} text-[12px]`}>20%</td>
              <td className={`${td} pr-0 text-clip`}>Платеж в...</td>
              <td className={td}>Аванс</td>
            </tr>
          </tbody>
        </table>
        <span className="absolute top-[2px] left-[33%] flex h-[20px] items-center border border-[#b5ad81] bg-[#ffffe1] px-[3px] text-[11px] text-black">
          Кассир
        </span>
      </div>
      <HScroll thumb="w-[67.500%]" />
    </div>
  );
}

function BigButton({ children, marked }: { children: string; marked?: boolean }) {
  return (
    <button
      type="button"
      className="relative flex h-[66px] flex-1 items-center justify-center rounded-[3px] border border-[#b5ad81] bg-[linear-gradient(#fffffc_0px,#f6f7e8_6px,#f6f5e4_36%,#f9f2dd_45%,#f6ecd2_92%,#efe9d6)] font-['DejaVu_Sans',sans-serif] text-[16px] text-[#4d3800]"
    >
      {children}
      {marked && <span className="pointer-events-none absolute -inset-x-[4px] -inset-y-[5px] border-[3px] border-[#ed1c24]" />}
    </button>
  );
}

function CashierPanel() {
  const label = 'w-[132px] shrink-0 whitespace-nowrap';
  const bold = "font-['DejaVu_Sans',sans-serif] font-bold";
  const tab = 'h-[22px] text-[14px] px-[10px]';
  return (
    <section className="flex min-w-0 flex-col">
      <header className="ml-px flex h-[17px] shrink-0 items-center bg-[#b3b1b4] pr-[2px] pl-[3px] text-[#5d5b5f]">
        <h2 className="flex-1 text-[12px] leading-[17px] font-bold">Внимание! Включено право РАЗРАБОТЧИК!</h2>
        <button type="button" aria-label="Закрепить" className="mr-[12px]">
          <svg viewBox="0 0 5 8" className="h-2 w-[5px]" aria-hidden="true">
            <path d="M1 1h3v4H1zM2.500 5v3" fill="none" stroke="#fff" />
          </svg>
        </button>
        <button type="button" aria-label="Закрыть панель">
          <svg viewBox="0 0 10 10" className="h-[10px] w-[10px]" aria-hidden="true">
            <path d="M1 1l8 8M9 1L1 9" stroke="currentColor" strokeWidth="2" />
          </svg>
        </button>
      </header>
      <div className="bg-[#fffcf8]">
        <div role="tablist" className="flex items-end gap-[7px] pl-[4px]">
          <Tab active size="h-[19px] w-[76px] text-[11px]">Интерфейс</Tab>
          <Tab size="h-[17px] w-[151px] text-[11px]">Техническая информация</Tab>
        </div>
      </div>
      <div className="flex flex-1 flex-col border border-r-0 border-[#b5ad81] bg-[#fffcf8] pt-[8px] pr-[9px] pb-[9px] pl-[8px]">
        <div className="flex flex-col gap-[2px]">
          <div className="grid grid-cols-[370px_minmax(0,1fr)] gap-x-[4px]">
            <Field label="ФР:" labelWidth="w-[90px]" value="АТОЛ: ККТ с передачей данных" />
            <Field label="ККМ:" labelWidth="w-[90px]" value="ККМ" />
          </div>
          <div className="grid grid-cols-[370px_minmax(0,1fr)] gap-x-[4px]">
            <Field label="Тип расчета ДС:" labelWidth="w-[90px]" value="Приход" />
          </div>
          <Field label="Кассир:" labelWidth="w-[90px]" mask="h-[15px] w-[94px]" white buttons={['dotsB', 'xB']} />
          <Field label="Признак агента:" labelWidth="w-[90px]" white buttons={['dotsB', 'xB']} />
        </div>
        <GoodsTable />
        <textarea aria-label="Сообщение" className="mt-[11px] block h-[41px] w-full resize-none border border-[#b5ad81] bg-white outline-none" />

        <div className="mt-[6px] text-[16px]">
          <div className="flex h-[22px] items-center">
            <label htmlFor="sno" className="w-[51px]">СНО:</label>
            <span className="flex min-w-0 flex-1 text-[13px]">
              <Box id="sno" value="Общая" white size="h-[22px]" buttons={['dotsB']} />
            </span>
          </div>
          <div className="mt-px flex h-[29px] items-center">
            <span className={label}>Смена:</span>
            <span className={bold}>Открыта</span>
          </div>
          <div className="flex h-[29px] items-center">
            <span className={label}>Сумма к оплате:</span>
            <span className={`ml-auto text-[#00a000] ${bold}`}>100,00 Руб</span>
          </div>
          <div className="flex h-[29px] items-center">
            <label htmlFor="paid" className={label}>Принято:</label>
            <span className="flex w-[252px]">
              <Box id="paid" value="100,00" white right size="h-[26px]" />
            </span>
          </div>
          <div className="flex h-[29px] items-center">
            <span className={label}>Сдача:</span>
            <span className={`w-[252px] text-right ${bold}`}>0</span>
          </div>
        </div>

        <div role="tablist" className="mt-[6px] flex items-end gap-[6px]">
          <Tab active size="h-[23px] text-[14px] px-[9px]">Основные</Tab>
          <Tab size={tab}>Касса</Tab>
          <Tab size={tab}>Покупатель</Tab>
          <Tab size={tab}>Поставщик</Tab>
          <Tab size={tab}>Коррекция</Tab>
        </div>
        <div className="flex flex-1 justify-center border border-[#b5ad81] pt-[7px]">
          <div className="flex w-[370px] flex-col gap-[4px]">
            <div className="flex gap-[8px]">
              <BigButton marked>Наличные</BigButton>
              <BigButton marked>Карточкой</BigButton>
            </div>
            <div className="flex">
              <BigButton>Пробитие чека</BigButton>
            </div>
          </div>
        </div>
      </div>
    </section>
  );
}

/* ---------- window bar ---------- */

function WindowBar() {
  const item = 'flex h-[20px] w-[172px] items-center gap-[2px] border border-[#b5ad81] pr-1 pl-[1px] whitespace-nowrap text-[#222]';
  return (
    <nav className="flex h-[22px] shrink-0 items-center gap-px pl-px">
      <button type="button" className={`${item} bg-[#b3b1b4]`}>
        <Icon name="hammerWrench" />
        Заказ-наряд
      </button>
      <button type="button" className={`${item} bg-[#b3b1b4]`}>
        <Icon name="new" />
        Дерево документов
      </button>
      <button type="button" className={`${item} bg-[#b4cfe8]`}>
        <Icon name="pko" />
        Приходный кассовый орде...
      </button>
    </nav>
  );
}

export default function App() {
  return (
    <div className="flex min-h-screen flex-col overflow-hidden border-t border-[#d4d0c8] bg-[#f8f2df] font-['Liberation_Sans',Arial,sans-serif] text-[11px] leading-[14px] text-[#3f2e05]">
      <Menu />
      <StandardBar />
      <ObjectsBar />
      <main className="mt-px grid flex-1 grid-cols-[588fr_768fr] gap-x-[5px]">
        <OrderWindow />
        <CashierPanel />
      </main>
      <WindowBar />
    </div>
  );
}
